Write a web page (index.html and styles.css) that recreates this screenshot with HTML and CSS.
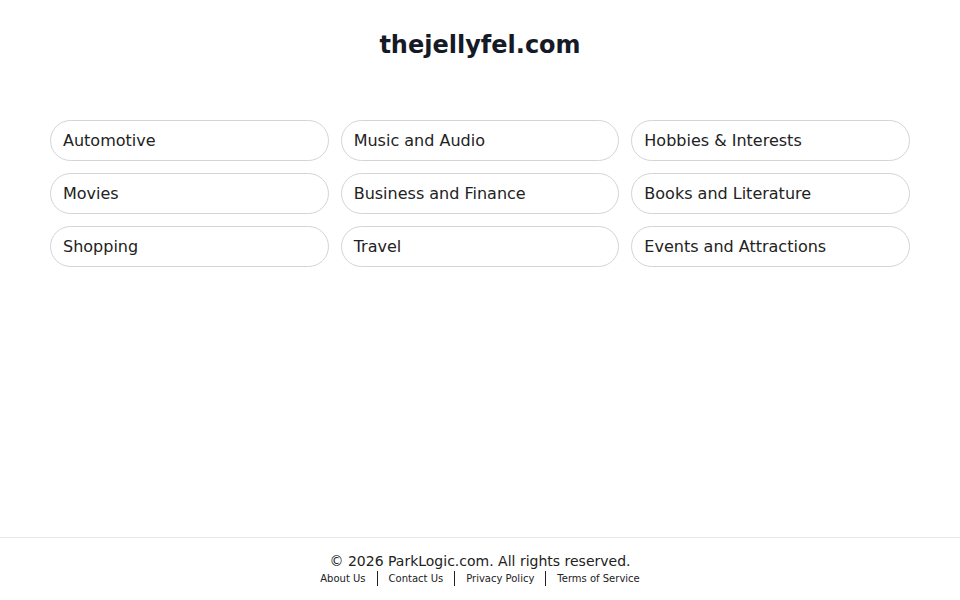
FILE: index.html
```html
<!DOCTYPE html>
<html lang="en">
<head>
<meta charset="utf-8">
<title>thejellyfel.com</title>
<link rel="stylesheet" href="styles.css">
</head>
<body>
<div class="page">
  <main class="main">
    <h1 class="title">thejellyfel.com</h1>
    <div class="grid">
      <a class="pill" href="#">Automotive</a>
      <a class="pill" href="#">Music and Audio</a>
      <a class="pill" href="#">Hobbies &amp; Interests</a>
      <a class="pill" href="#">Movies</a>
      <a class="pill" href="#">Business and Finance</a>
      <a class="pill" href="#">Books and Literature</a>
      <a class="pill" href="#">Shopping</a>
      <a class="pill" href="#">Travel</a>
      <a class="pill" href="#">Events and Attractions</a>
    </div>
  </main>
  <footer class="footer">
    <div class="copy">© 2026 ParkLogic.com. All rights reserved.</div>
    <nav class="links">
      <a href="#">About Us</a><span class="sep"></span><a href="#">Contact Us</a><span class="sep"></span><a href="#">Privacy Policy</a><span class="sep"></span><a href="#">Terms of Service</a>
    </nav>
  </footer>
</div>
</body>
</html>
```
FILE: styles.css
```css
html, body {
  margin: 0;
  padding: 0;
  background: #ffffff;
}
body {
  font-family: "DejaVu Sans", sans-serif;
  color: #222222;
}
.page {
  min-height: 100vh;
  display: flex;
  flex-direction: column;
}
.main {
  flex: 1;
  padding: 29px 50px 0;
}
.title {
  margin: 0;
  font-size: 24px;
  line-height: 32px;
  font-weight: bold;
  text-align: center;
  color: #151a26;
}
.grid {
  margin-top: 59px;
  display: grid;
  grid-template-columns: repeat(3, 1fr);
  gap: 12px;
}
.pill {
  display: block;
  height: 41px;
  box-sizing: border-box;
  border: 1px solid #d4d4d8;
  border-radius: 9999px;
  padding: 0 12px;
  font-size: 16px;
  line-height: 39px;
  color: #222222;
  text-decoration: none;
}
.footer {
  border-top: 1px solid #e5e7eb;
  padding: 13px 0 14px;
  text-align: center;
}
.copy {
  font-size: 14px;
  line-height: 20px;
  color: #222222;
}
.links {
  display: flex;
  justify-content: center;
  align-items: center;
  font-size: 10px;
  line-height: 15px;
  margin-top: 0;
}
.links a {
  color: #222222;
  text-decoration: none;
}
.sep {
  display: inline-block;
  width: 0;
  height: 15px;
  border-left: 1px solid #222222;
  margin: 0 11px;
}
```
